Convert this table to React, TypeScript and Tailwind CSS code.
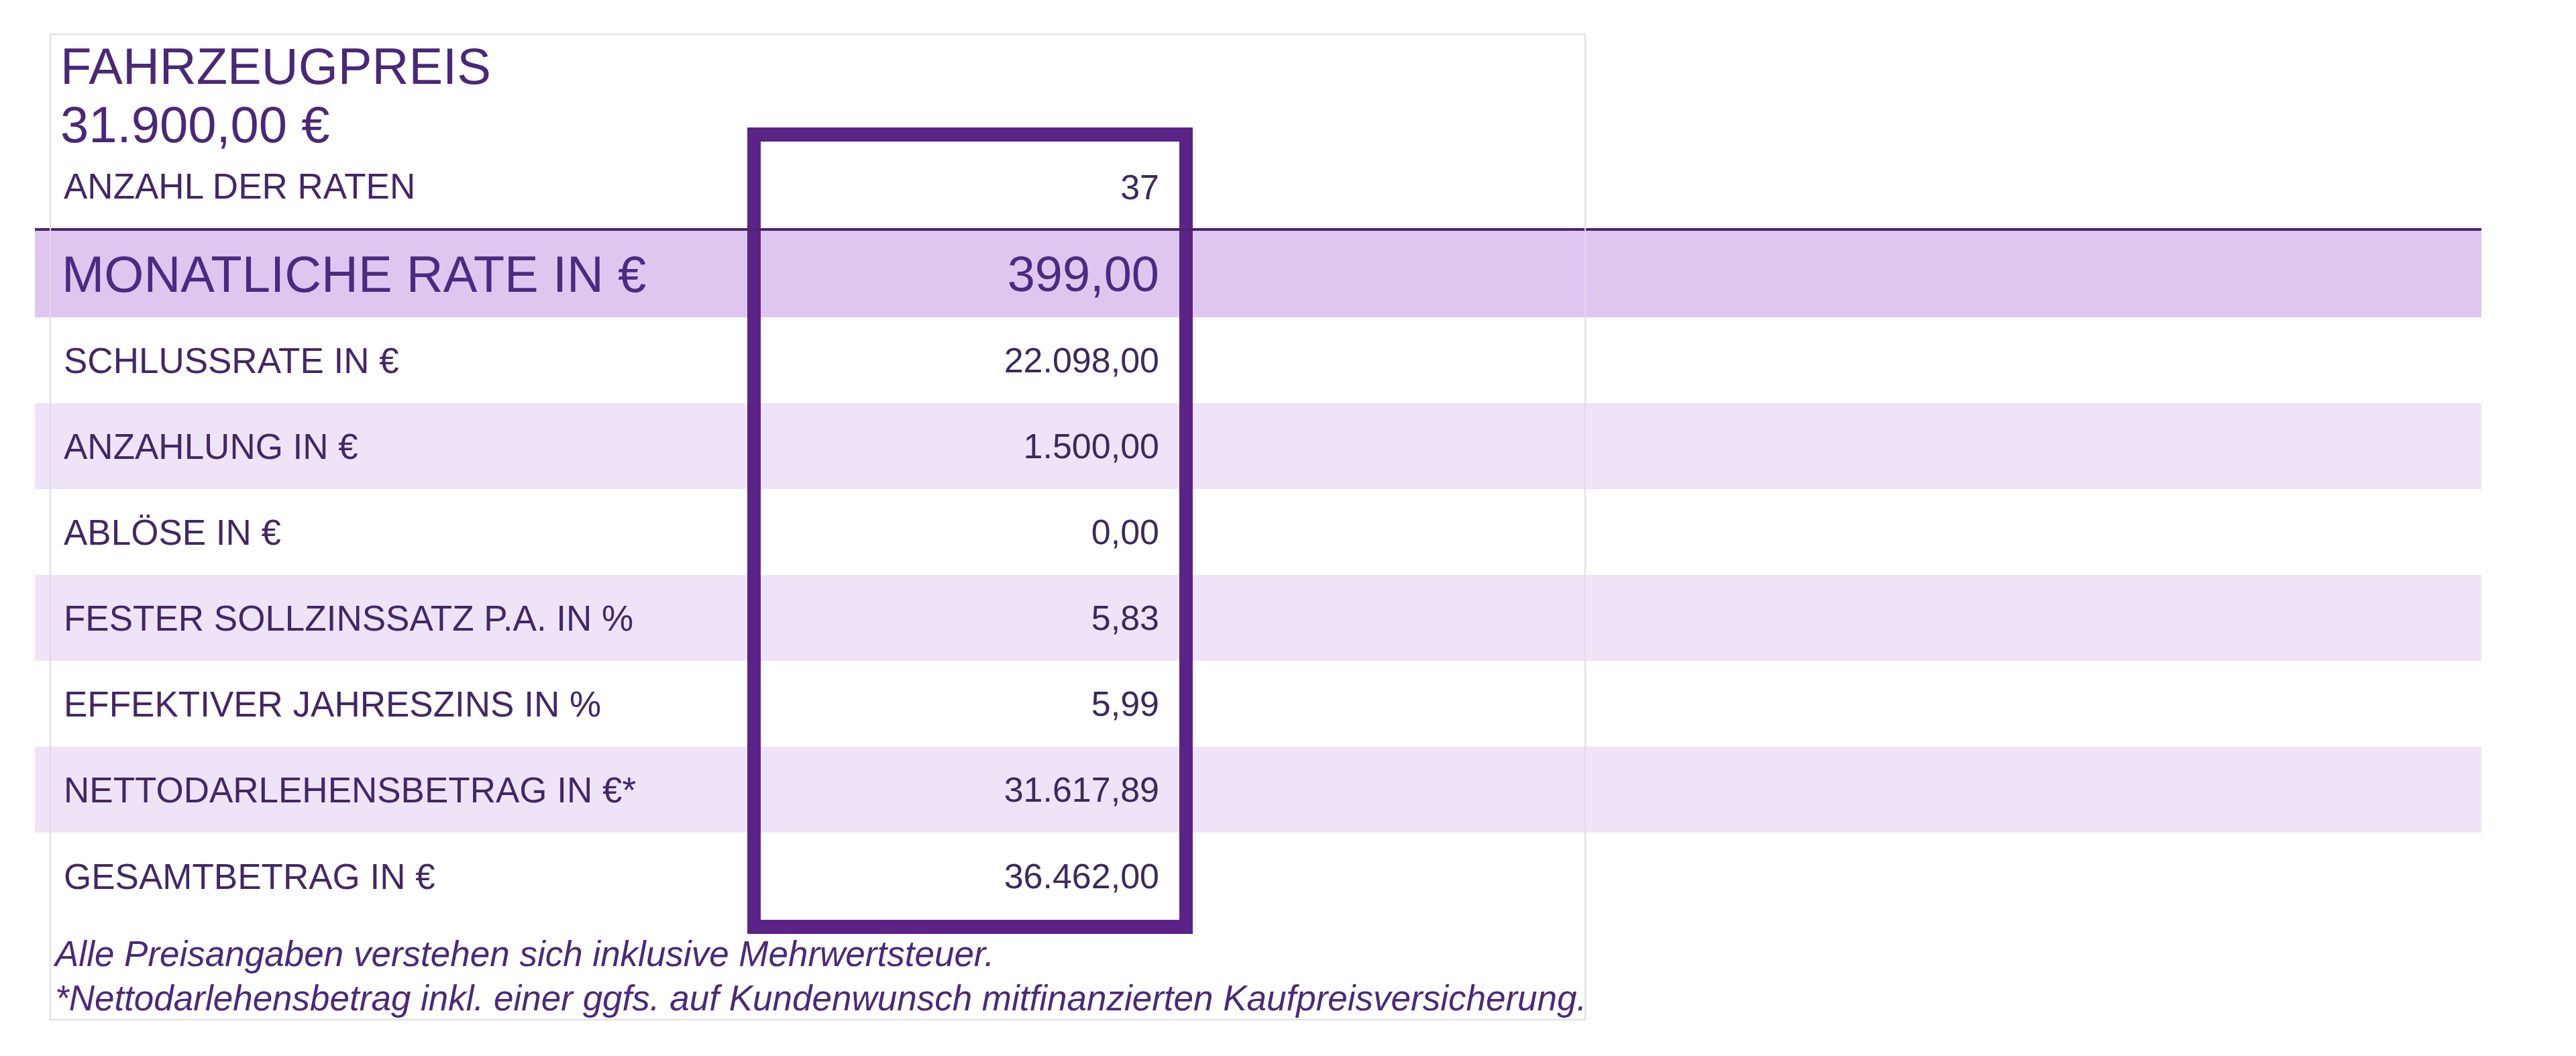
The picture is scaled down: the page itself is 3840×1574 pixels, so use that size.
export default function App() {
  const rows = [
    { label: "SCHLUSSRATE IN €", value: "22.098,00", shade: false },
    { label: "ANZAHLUNG IN €", value: "1.500,00", shade: true },
    { label: "ABLÖSE IN €", value: "0,00", shade: false },
    { label: "FESTER SOLLZINSSATZ P.A. IN %", value: "5,83", shade: true },
    { label: "EFFEKTIVER JAHRESZINS IN %", value: "5,99", shade: false },
    { label: "NETTODARLEHENSBETRAG IN €*", value: "31.617,89", shade: true },
    { label: "GESAMTBETRAG IN €", value: "36.462,00", shade: false },
  ];

  return (
    <div className="min-h-screen bg-white pl-[74px] pt-[50px] font-['Liberation_Sans',Arial,sans-serif]">
      <div className="relative w-[2290px]">
        <div className="pointer-events-none absolute inset-0 z-10 border-2 border-[#dedede]" />

        <div className="pl-[16px] pt-[5px] text-[76px] leading-[87px] text-[#4a2878]">
          <div>FAHRZEUGPREIS</div>
          <div>31.900,00 €</div>
        </div>

        <div className="-ml-[22px] flex h-[111px] w-[3647px] items-start">
          <div className="w-[1062px] pl-[43px] pt-[19px] text-[53px] leading-[60px] text-[#432766]">
            ANZAHL DER RATEN
          </div>
          <div className="-mt-[39px] h-[150px] w-[664px] border-x-[20px] border-t-[21px] border-[#5b2385] pr-[30px] pt-[38px] text-right text-[52px] leading-[60px] text-[#3c2a5c]">
            37
          </div>
        </div>

        <div className="-ml-[22px] flex h-[133px] w-[3647px] border-t-4 border-[#4a2572] bg-[#dfc6ef]">
          <div className="flex w-[1062px] items-center pl-[40px] text-[76px] leading-none text-[#4c2a80]">
            MONATLICHE RATE IN €
          </div>
          <div className="flex w-[664px] items-center justify-end border-x-[20px] border-[#5b2385] pr-[30px] text-[74px] leading-none text-[#4c2a80]">
            399,00
          </div>
        </div>

        {rows.map((r, i) => (
          <div
            key={r.label}
            className={`-ml-[22px] flex w-[3647px] ${i === rows.length - 1 ? "h-[130px]" : "h-[128px]"} ${r.shade ? "bg-[#efe3f7]" : "bg-white"}`}
          >
            <div className="flex w-[1062px] items-center pl-[43px] text-[53px] leading-none text-[#432766]">
              {r.label}
            </div>
            <div className="flex w-[664px] items-center justify-end border-x-[20px] border-[#5b2385] pr-[30px] text-[52px] leading-none text-[#3c2a5c]">
              {r.value}
            </div>
          </div>
        ))}

        <div className="ml-[1040px] h-[21px] w-[664px] bg-[#5b2385]" />

        <div className="-mt-[3px] whitespace-nowrap pl-[8px] text-[53px] italic leading-[66px] text-[#4a2a78]">
          <div>Alle Preisangaben verstehen sich inklusive Mehrwertsteuer.</div>
          <div>*Nettodarlehensbetrag inkl. einer ggfs. auf Kundenwunsch mitfinanzierten Kaufpreisversicherung.</div>
        </div>
      </div>
    </div>
  );
}
